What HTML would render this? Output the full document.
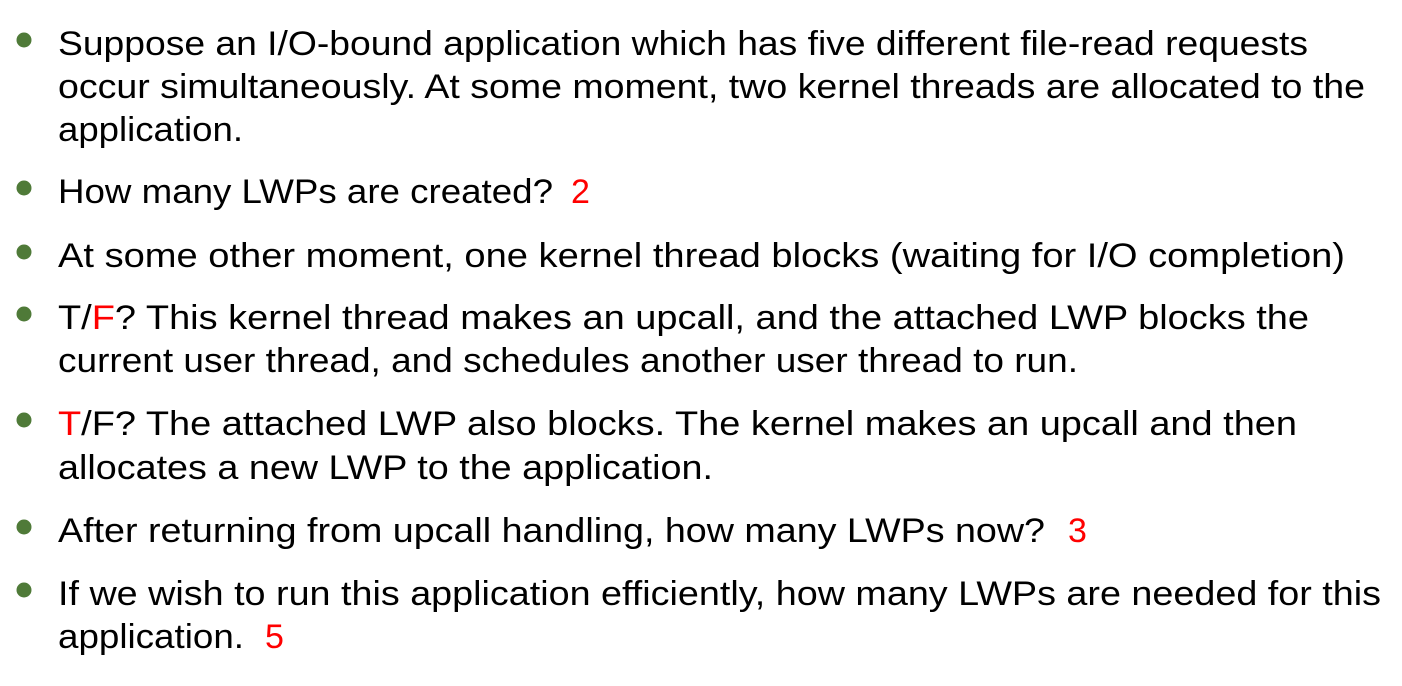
<!DOCTYPE html>
<html><head><style>
html,body{margin:0;padding:0;background:#fff;}
svg{display:block;}
text{font-family:"Liberation Sans","DejaVu Sans",sans-serif;font-size:34px;fill:#000;}
.r{fill:#ff0000;}
</style></head><body>
<svg width="1402" height="686" xmlns="http://www.w3.org/2000/svg">
<g fill="#4f7a38">
<circle cx="24" cy="40" r="7.5"/>
<circle cx="24" cy="188" r="7.5"/>
<circle cx="24" cy="252" r="7.5"/>
<circle cx="24" cy="314" r="7.5"/>
<circle cx="24" cy="420" r="7.5"/>
<circle cx="24" cy="527" r="7.5"/>
<circle cx="24" cy="590" r="7.5"/>
</g>
<text x="58" y="55" textLength="1250" lengthAdjust="spacingAndGlyphs">Suppose an I/O-bound application which has five different file-read requests</text>
<text x="58" y="98" textLength="1307" lengthAdjust="spacingAndGlyphs">occur simultaneously. At some moment, two kernel threads are allocated to the</text>
<text x="58" y="141" textLength="185" lengthAdjust="spacingAndGlyphs">application.</text>
<text x="58" y="203" textLength="495" lengthAdjust="spacingAndGlyphs">How many LWPs are created?</text>
<text x="571" y="203" class="r">2</text>
<text x="58" y="267" textLength="1287" lengthAdjust="spacingAndGlyphs">At some other moment, one kernel thread blocks (waiting for I/O completion)</text>
<text x="58" y="329" textLength="1251" lengthAdjust="spacingAndGlyphs">T/<tspan class="r">F</tspan>? This kernel thread makes an upcall, and the attached LWP blocks the</text>
<text x="58" y="372" textLength="1020" lengthAdjust="spacingAndGlyphs">current user thread, and schedules another user thread to run.</text>
<text x="58" y="435" textLength="1239" lengthAdjust="spacingAndGlyphs"><tspan class="r">T</tspan>/F? The attached LWP also blocks. The kernel makes an upcall and then</text>
<text x="58" y="479" textLength="655" lengthAdjust="spacingAndGlyphs">allocates a new LWP to the application.</text>
<text x="58" y="542" textLength="987" lengthAdjust="spacingAndGlyphs">After returning from upcall handling, how many LWPs now?</text>
<text x="1068" y="542" class="r">3</text>
<text x="58" y="605" textLength="1323" lengthAdjust="spacingAndGlyphs">If we wish to run this application efficiently, how many LWPs are needed for this</text>
<text x="58" y="648" textLength="186" lengthAdjust="spacingAndGlyphs">application.</text>
<text x="265" y="648" class="r">5</text>
</svg>
</body></html>
